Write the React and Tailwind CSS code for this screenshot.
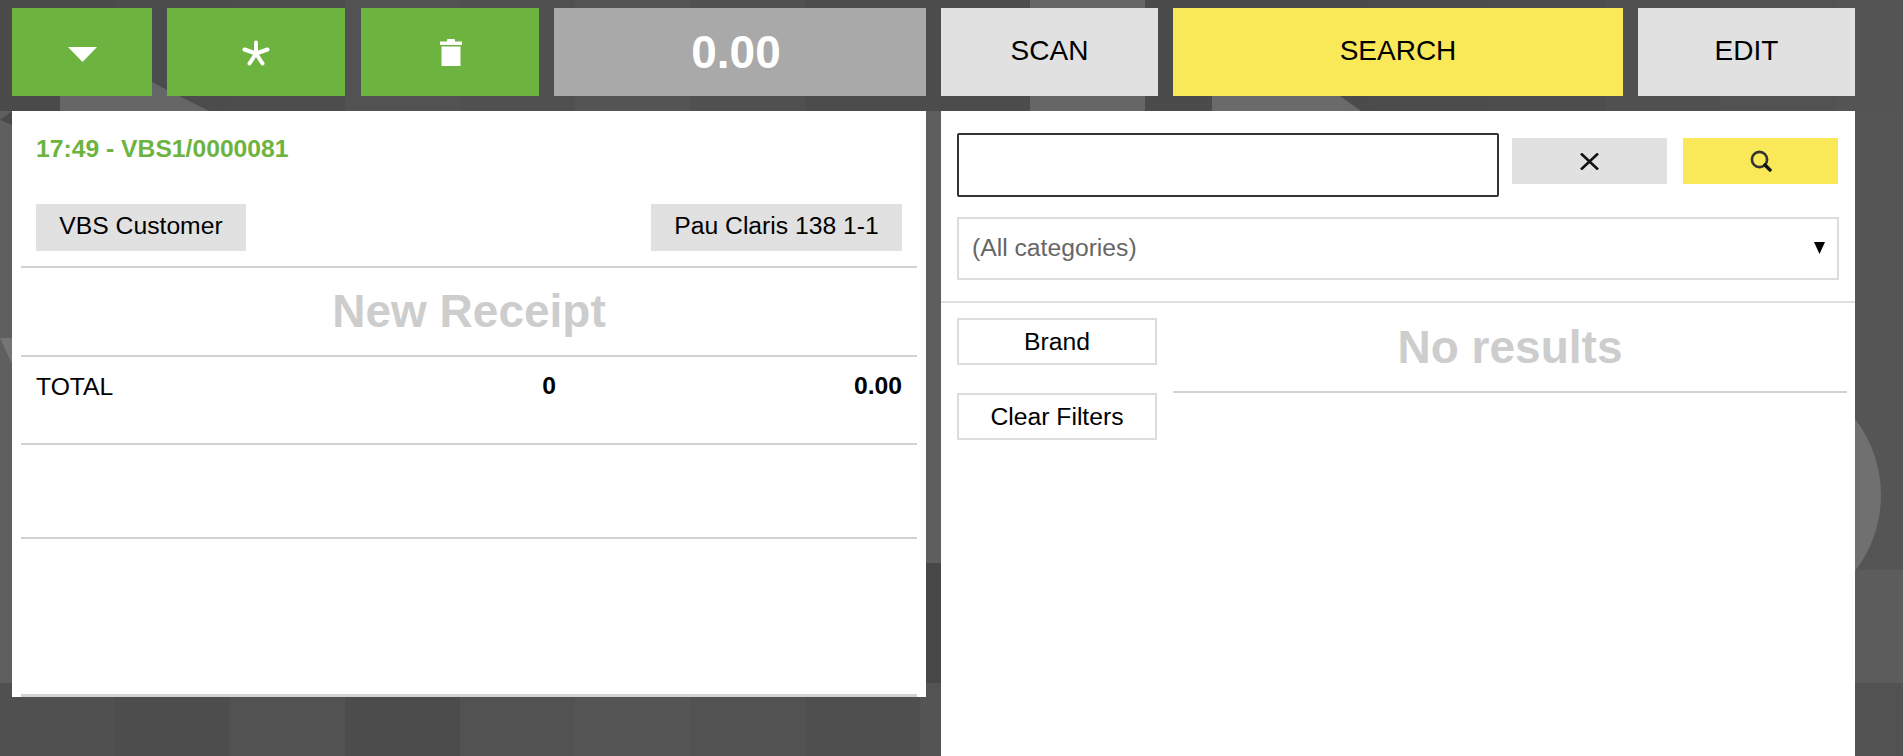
const font = "font-['Liberation_Sans',Arial,sans-serif]";

const topTiles = ["#4a4a4a", "#4c4c4c", "#4d4d4d", "#525252", "#505050", "#545454", "#505050", "#4c4c4c", "#4c4c4c", "#666666", "#4b4b4b", "#4b4b4b", "#4c4c4c", "#4d4d4d", "#505050", "#525252", "#545454"];
const bottomTiles = ["#505050", "#4d4d4d", "#525252", "#4c4c4c", "#525252", "#555555", "#525252", "#4f4f4f"];

function Background() {
  return (
    <svg className="absolute inset-0 w-full h-full" viewBox="0 0 1903 756" preserveAspectRatio="none">
      <rect width="1903" height="756" fill="#545454" />
      {topTiles.map((c, i) => (
        <rect key={i} x={i * 115 - (i > 8 ? 5 : 0)} y="0" width={i === 9 ? 121 : 125} height="111" fill={c} />
      ))}
      <rect x="1855" y="0" width="48" height="570" fill="#545454" />
      <rect x="0" y="111" width="1903" height="572" fill="#555555" />
      {bottomTiles.map((c, i) => (
        <rect key={i} x={i * 115} y="683" width="115" height="73" fill={c} />
      ))}
      <rect x="0" y="111" width="12" height="572" fill="#5f5f5f" />
      <path d="M0 120L12 111V125Z" fill="#4a4a4a" />
      <path d="M0 338H12V364Z" fill="#757575" />
      <path d="M60 120V96H152V82L167 90L209 111V120Z" fill="#666666" />
      <path d="M1212 120V96H1340L1361 111V120Z" fill="#6a6a6a" />
      <rect x="926" y="111" width="15" height="452" fill="#5e5e5e" />
      <rect x="926" y="563" width="15" height="120" fill="#474747" />
      <rect x="1855" y="570" width="48" height="113" fill="#5c5c5c" />
      <rect x="1855" y="683" width="48" height="73" fill="#525252" />
      <circle cx="1757" cy="495" r="124" fill="#707070" />
    </svg>
  );
}

function TopBtn({ className = "", children }) {
  return <div className={`flex items-center justify-center h-full ${className}`}>{children}</div>;
}

export default function App() {
  return (
    <div className={`relative w-[1903px] h-[756px] overflow-hidden ${font}`}>
      <Background />
      <div className="relative flex flex-col h-full pt-2 pl-3 pr-[47px]">
        <div className="flex h-[88px] text-[28px] text-black shrink-0">
          <TopBtn className="w-[140px] bg-[#6db33f]">
            <svg width="29" height="15" viewBox="0 0 29 15" className="mt-[5px]"><path d="M0 0H29L14.5 15Z" fill="#fff" /></svg>
          </TopBtn>
          <TopBtn className="w-[178px] ml-[15px] bg-[#6db33f]">
            <svg width="28" height="26" viewBox="0 0 28 26" className="mt-[2px]">
              <g stroke="#fff" strokeWidth="4" strokeLinecap="round">
                <path d="M14 2.5V12" />
                <path d="M2.5 9.5L12.5 13" />
                <path d="M25.5 9.5L15.5 13" />
                <path d="M7.5 23.5L13 15" />
                <path d="M20.5 23.5L15 15" />
              </g>
            </svg>
          </TopBtn>
          <TopBtn className="w-[178px] ml-[16px] bg-[#6db33f]">
            <svg width="22" height="27" viewBox="0 0 22 27" className="ml-[1px]">
              <path d="M0 2.5H7V1Q7 0 8 0H14Q15 0 15 1V2.5H22V6H0Z" fill="#fff" />
              <path d="M1.5 7.5H20.5V27H1.5Z" fill="#fff" />
            </svg>
          </TopBtn>
          <TopBtn className="w-[372px] ml-[15px] pr-[8px] bg-[#a9a9a9] text-white font-bold text-[46px]">0.00</TopBtn>
          <TopBtn className="w-[217px] ml-[15px] pb-[2px] bg-[#e1e1e1]">SCAN</TopBtn>
          <TopBtn className="w-[450px] ml-[15px] pb-[2px] bg-[#f9e858]">SEARCH</TopBtn>
          <TopBtn className="w-[217px] ml-[15px] pb-[2px] bg-[#e1e1e1]">EDIT</TopBtn>
        </div>
        <div className="flex mt-[15px] flex-1 min-h-0 items-start">
          <div className="w-[914px] h-[586px] bg-white flex flex-col px-[9px] overflow-hidden">
            <div className="px-[15px] h-[157px] border-b-2 border-[#d2d2d2] flex flex-col shrink-0">
              <div className="text-[#6db33f] font-bold text-[24.7px] leading-[28px] mt-6">17:49 - VBS1/0000081</div>
              <div className="flex justify-between mt-[41px] text-[24.7px] text-black">
                <div className="h-[47px] w-[210px] pb-[3px] bg-[#e1e1e1] flex items-center justify-center">VBS Customer</div>
                <div className="h-[47px] w-[251px] pb-[3px] bg-[#e1e1e1] flex items-center justify-center">Pau Claris 138 1-1</div>
              </div>
            </div>
            <div className="h-[89px] border-b-2 border-[#d2d2d2] flex items-center justify-center text-[#cdcdcd] font-bold text-[46px] shrink-0">New Receipt</div>
            <div className="h-[88px] border-b-2 border-[#d2d2d2] relative px-[15px] pt-[10px] text-[24.7px] text-black shrink-0">
              <div className="flex">
                <span className="flex-1 pt-[1px]">TOTAL</span>
                <span className="w-[36px] text-center font-bold absolute left-[510px]">0</span>
                <span className="font-bold">0.00</span>
              </div>
            </div>
            <div className="h-[94px] border-b-2 border-[#d2d2d2] shrink-0" />
            <div className="flex-1 border-b-[3px] border-[#d2d2d2]" />
          </div>
          <div className="w-[914px] ml-[15px] h-[645px] bg-white flex flex-col">
            <div className="h-[192px] border-b-2 border-[#e0e0e0] px-[16px] pt-[22px] shrink-0">
              <div className="flex items-start">
                <div className="w-[542px] h-[64px] border-2 border-[#333] rounded-[2px] bg-white" />
                <div className="w-[155px] h-[46px] ml-[13px] mt-[5px] bg-[#e1e1e1] flex items-center justify-center">
                  <svg width="19" height="17" viewBox="0 0 19 17"><path d="M1 0.5L18 16.5M18 0.5L1 16.5" stroke="#111" strokeWidth="2.6" /></svg>
                </div>
                <div className="w-[155px] h-[46px] ml-[16px] mt-[5px] bg-[#f9e858] flex items-center justify-center">
                  <svg width="22" height="22" viewBox="0 0 22 22"><circle cx="9.5" cy="9.5" r="7.6" fill="none" stroke="#333" strokeWidth="2.6" /><path d="M15 15L20 20" stroke="#111" strokeWidth="3.4" strokeLinecap="round" /></svg>
                </div>
              </div>
              <div className="relative w-[882px] h-[63px] mt-[20px] pb-[1px] border-2 border-[#dcdcdc] flex items-center pl-[13px] text-[24.7px] text-[#666]">
                (All categories)
                <svg width="11" height="12" viewBox="0 0 11 12" className="absolute right-[12px] top-[23px]"><path d="M0 0H11L5.5 12Z" fill="#000" /></svg>
              </div>
            </div>
            <div className="flex flex-1 min-h-0 pl-[16px] pr-2">
              <div className="w-[200px] pt-[15px] shrink-0 flex flex-col gap-[28px] text-[24.7px] text-black">
                <div className="h-[47px] border-2 border-[#dcdcdc] flex items-center justify-center">Brand</div>
                <div className="h-[47px] border-2 border-[#dcdcdc] flex items-center justify-center">Clear Filters</div>
              </div>
              <div className="flex-1 ml-4">
                <div className="h-[90px] border-b-2 border-[#d2d2d2] flex items-center justify-center text-[#cdcdcd] font-bold text-[46px]">No results</div>
              </div>
            </div>
          </div>
        </div>
      </div>
    </div>
  );
}
